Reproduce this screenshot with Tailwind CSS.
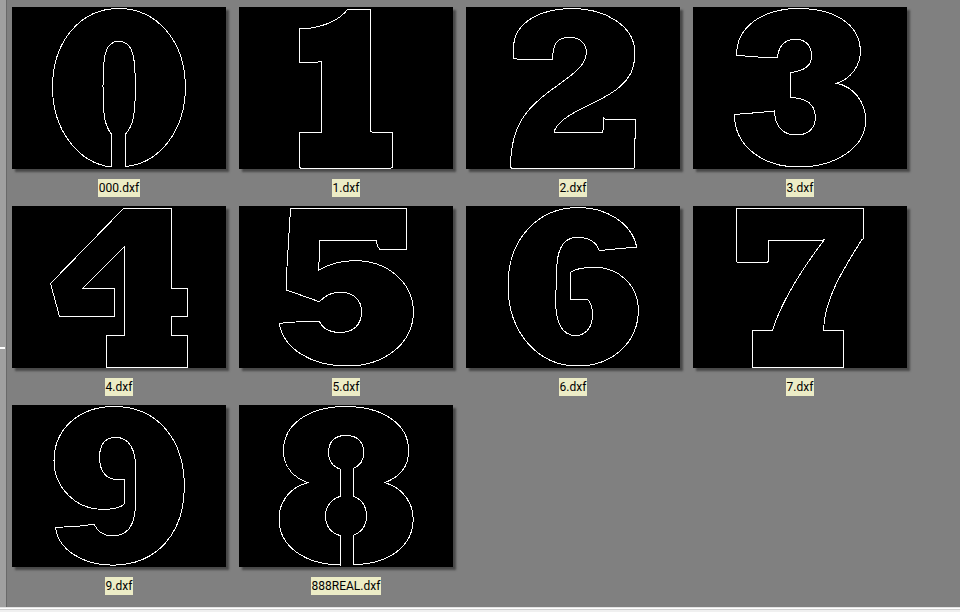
<!DOCTYPE html>
<html lang="en">
<head>
    <meta charset="UTF-8">
    <meta name="viewport" content="width=device-width, initial-scale=1.0">
    <title>DXF Thumbnails</title>
    <script src="https://cdn.jsdelivr.net/npm/@tailwindcss/browser@4"></script>
    <style>
        body {
            font-family: Roboto, 'Open Sans', sans-serif;
        }
        svg path {
            fill: none;
            stroke: #fff;
            stroke-width: 3;
            shape-rendering: crispEdges;
        }
    </style>
</head>
<body class="bg-[#808080] min-h-screen flex flex-col text-[12px] text-black">
    <div class="flex flex-1">
        <!-- splitter -->
        <div class="relative w-[7px] shrink-0 bg-[#a0a0a0] border-r border-[#696969]">
            <div class="absolute left-0 top-[347px] w-[5px] h-[2px] bg-white"></div>
        </div>

        <main class="flex-1 flex flex-wrap content-start gap-x-[13px] gap-y-[9px] pl-[5px] pt-[7px] pb-3">
            <figure class="w-[214px] flex flex-col items-center gap-[10px]">
                <svg class="w-full bg-black shadow-[3px_3px_2px_#484848]" viewBox="36 21 642 486">
                    <path d="M334.5 501 C235 490 157.5 390 157.5 262 C157.5 120 245 25.5 356 25.5 C468 25.5 556 120 556 262 C556 390 480 490 376.5 499.5 V403 C398 378 406 350 406 262 C406 170 400 124 356 124 C314 124 309 170 309 262 C309 350 314 375 334.5 403 Z"/>
                </svg>
                <figcaption class="h-[18px] px-[1px] leading-[18px] bg-[#ececc6]">000.dxf</figcaption>
            </figure>

            <figure class="w-[214px] flex flex-col items-center gap-[10px]">
                <svg class="w-full bg-black shadow-[3px_3px_2px_#484848]" viewBox="27 21 642 486">
                    <path d="M208.5 85.5 H235 C285 78 330 58 352.5 28.5 H421.5 V394.5 L430 397.5 H487.5 V502 L480 505.5 H213 L208.5 501 V397.5 H274.5 V184.5 H265 L262 187.5 H208.5 Z"/>
                </svg>
                <figcaption class="h-[18px] px-[1px] leading-[18px] bg-[#ececc6]">1.dxf</figcaption>
            </figure>

            <figure class="w-[214px] flex flex-col items-center gap-[10px]">
                <svg class="w-full bg-black shadow-[3px_3px_2px_#484848]" viewBox="18 21 642 486">
                    <path d="M160.5 175.5 L181 178.5 H277.5 C279 140 285 112 328 112 C360 112 379 130 379 158 C379 195 340 222 296 254 C215 312 151.5 360 151.5 501 L156 505.5 H520 L523.5 502 V417 L526.5 414 V357.5 H436 L430.5 354 V382 L427.5 397.5 H285 L283 392 C300 355 350 333 400 309 C455 282 523.5 245 523.5 172 V145 C517 80 440 25.5 337 25.5 C245 25.5 160.5 65 160.5 145 Z"/>
                </svg>
                <figcaption class="h-[18px] px-[1px] leading-[18px] bg-[#ececc6]">2.dxf</figcaption>
            </figure>

            <figure class="w-[214px] flex flex-col items-center gap-[10px]">
                <svg class="w-full bg-black shadow-[3px_3px_2px_#484848]" viewBox="24 21 642 486">
                    <path d="M154.5 166 L240 172.5 H277 C281 140 295 118 332 118 C365 118 380 140 380 168 C380 195 360 213 316.5 217.5 V292.5 C365 294 391 315 391 352 C391 385 370 405 334 405 C295 405 269 380 269 333 L215 338 L148.5 343.5 C148.5 440 235 501 340 501 C455 501 542 440 542 362 C542 305 505 260 455 250 C500 235 526 195 526 155 C526 70 445 25.5 340 25.5 C240 25.5 154.5 75 154.5 166 Z"/>
                </svg>
                <figcaption class="h-[18px] px-[1px] leading-[18px] bg-[#ececc6]">3.dxf</figcaption>
            </figure>

            <figure class="w-[214px] flex flex-col items-center gap-[10px]">
                <svg class="w-full bg-black shadow-[3px_3px_2px_#484848]" viewBox="36 18 642 486">
                    <path d="M370.5 25.5 H514.5 V265.5 H562.5 V349.5 H514.5 V406.5 H562.5 V502.5 H319.5 V406.5 H373.5 V139.5 L247.5 265.5 H343.5 V349.5 H178.5 L151.5 250.5 Z"/>
                </svg>
                <figcaption class="h-[18px] px-[1px] leading-[18px] bg-[#ececc6]">4.dxf</figcaption>
            </figure>

            <figure class="w-[214px] flex flex-col items-center gap-[10px]">
                <svg class="w-full bg-black shadow-[3px_3px_2px_#484848]" viewBox="27 18 642 486">
                    <path d="M181.5 25.5 H529.5 V148.5 H450 L444 141 L438 120 V121.5 H268.5 V165 L265.5 211 C300 190 330 182 375 182 C475 182 550 250 550 335 C550 430 465 498 350 498 C250 498 160 450 148 370 L215 364.5 H268 C280 388 305 397.5 330 397.5 C370 397.5 394.5 375 394.5 335 C394.5 300 370 276.5 330 276.5 C305 276.5 285 288 270 303 H262 L169.5 270 V225 Z"/>
                </svg>
                <figcaption class="h-[18px] px-[1px] leading-[18px] bg-[#ececc6]">5.dxf</figcaption>
            </figure>

            <figure class="w-[214px] flex flex-col items-center gap-[10px]">
                <svg class="w-full bg-black shadow-[3px_3px_2px_#484848]" viewBox="18 18 642 486">
                    <path d="M529.5 139 C515 70 440 22.5 355 22.5 C235 22.5 144 115 144 255 C144 405 240 498 352 498 C460 498 535 425 535 330 C535 255 475 202 405 202 C370 202 345 207 331.5 217 V300 L350 298 H382 C393 307 397.5 325 397.5 345 C397.5 385 375 406.5 347 406.5 C305 406.5 287 370 287 300 L290 215 C290 150 310 112 352 112 C385 112 408 125 418 151.5 L529.5 141 Z"/>
                </svg>
                <figcaption class="h-[18px] px-[1px] leading-[18px] bg-[#ececc6]">6.dxf</figcaption>
            </figure>

            <figure class="w-[214px] flex flex-col items-center gap-[10px]">
                <svg class="w-full bg-black shadow-[3px_3px_2px_#484848]" viewBox="24 18 642 486">
                    <path d="M154.5 25.5 H535.5 V115 L530 120 C480 200 420 290 415.5 388 V390.5 H475.5 V502.5 H202.5 V390.5 H262.5 C285 320 330 235 418 119 L412 121.5 H250.5 V184 L246 187.5 H158 L154.5 184 Z"/>
                </svg>
                <figcaption class="h-[18px] px-[1px] leading-[18px] bg-[#ececc6]">7.dxf</figcaption>
            </figure>

            <figure class="w-[214px] flex flex-col items-center gap-[10px]">
                <svg class="w-full bg-black shadow-[3px_3px_2px_#484848]" viewBox="36 15 642 486">
                    <path d="M166.5 382.5 L240 378 L282 373 C292 393 312 408 337 408 C385 408 406.5 370 406.5 310 L408 215 C408 150 390 112 346 112 C315 112 298.5 135 298.5 172 C298.5 215 320 238 350 238 H373.5 V311 C362 325 340 328 308 328 C225 328 162 260 162 182 C162 85 240 19.5 342 19.5 C470 19.5 553 115 553 260 C553 400 470 495.5 337 495.5 C250 495.5 175 450 166.5 382.5 Z"/>
                </svg>
                <figcaption class="h-[18px] px-[1px] leading-[18px] bg-[#ececc6]">9.dxf</figcaption>
            </figure>

            <figure class="w-[214px] flex flex-col items-center gap-[10px]">
                <svg class="w-full bg-black shadow-[3px_3px_2px_#484848]" viewBox="27 15 642 486">
                    <path d="M331.5 499 V495 C225 493 147 440 147 357 C147 305 180 262 233 248 C185 230 160.5 195 160.5 152 C160.5 70 240 19.5 347 19.5 C455 19.5 536 70 536 152 C536 195 512 230 464 248 C515 262 549.5 305 549.5 357 C549.5 440 475 493 370.5 493.5 V406 C395 396 409.5 378 409.5 348 C409.5 318 395 298 370.5 289 V205 C390 197 401 180 401 157 C401 125 380 106 348 106 C315 106 295.5 125 295.5 157 C295.5 183 308 200 331.5 208 V289 C305 296 286.5 320 286.5 348 C286.5 378 303 400 331.5 407 Z"/>
                </svg>
                <figcaption class="h-[18px] px-[1px] leading-[18px] bg-[#ececc6]">888REAL.dxf</figcaption>
            </figure>
        </main>
    </div>

    <!-- bottom edge of the pane -->
    <footer class="h-[5px] bg-[#f0f0f0] border-t border-[#e3e3e3]">
        <div class="h-[2px] bg-white border-b border-[#d0d0d0]"></div>
    </footer>
</body>
</html>
